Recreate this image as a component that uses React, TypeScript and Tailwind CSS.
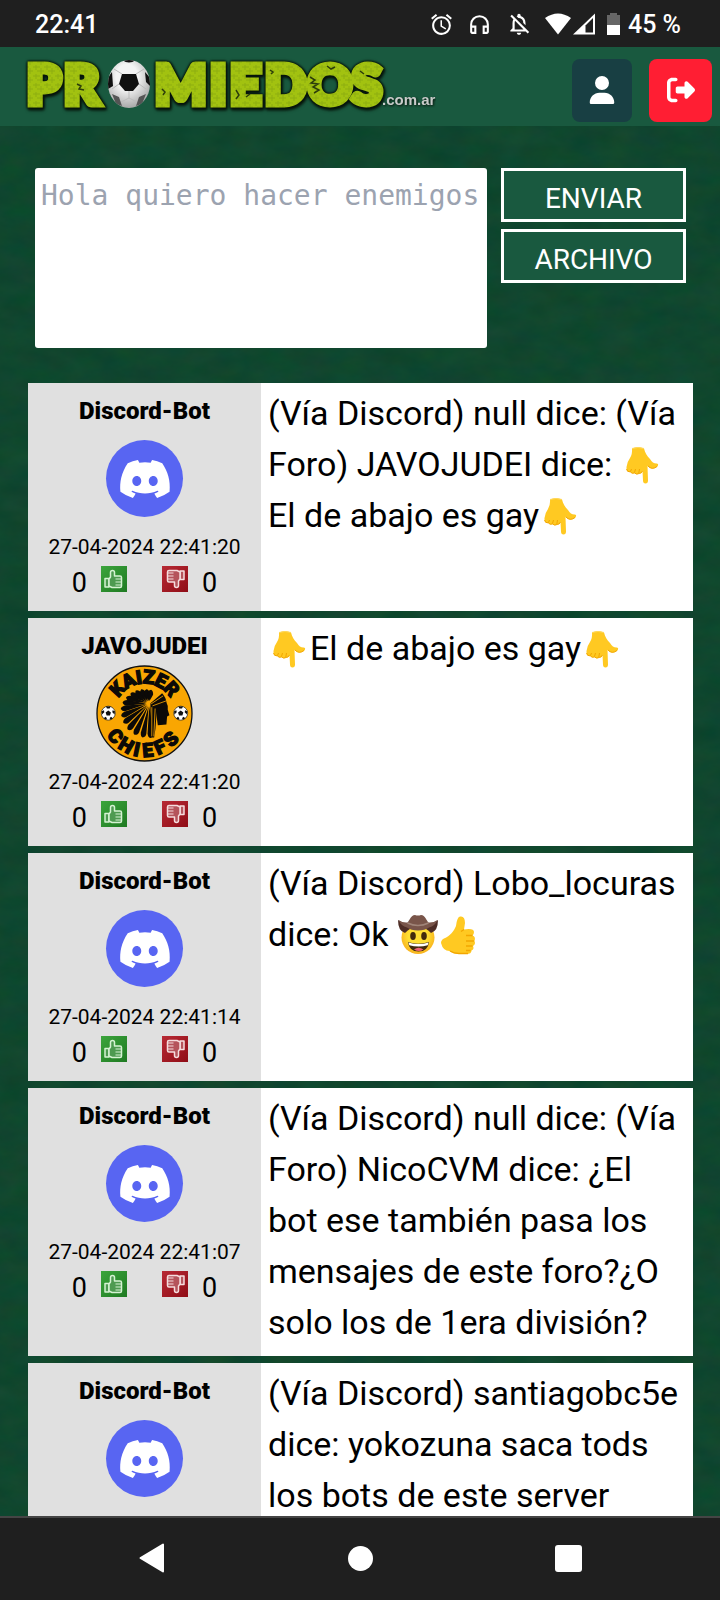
import type { ReactNode } from "react";
import { FaDiscord, FaRightFromBracket, FaUser } from "react-icons/fa6";
import { MdAlarm, MdOutlineHeadphones, MdOutlineNotificationsOff } from "react-icons/md";

type Message = {
  id: number;
  user: string;
  avatar: "discord" | "kaizer";
  date?: string;
  body: ReactNode;
};

function PointDown() {
  return (
    <svg viewBox="0 0 40 40" role="img" aria-label="👇" className="mx-px inline-block h-10 w-10 align-[-9px]">
      <path
        d="M10 3.5Q16 .5 22 3.500C23 8 25 11 28 14q3 5 7 4.500q2 .5.500 3q-6 4-10-.5l.5 14.500q0 3-2.500 3t-2.500-3L20.500 26q-1 3-3.500 2.500q-2.500 1.500-4.500-.5q-3 1-4-1q-4.500.5-4-5q.5-5 3.500-9Q10.500 9 10 3.500Z"
        fill="#ffc922"
      />
      <path d="M10 3.500Q16 1.500 22 3.500" fill="none" stroke="#ffd95e" />
      <path d="M4.600 24q0 3 4 3q1 2 4 1q2 2 4.500.5q2.500 0 3.400-2.500M9.500 24l-1 2.500M13.500 24l-1 3.500M17.500 24l-.7 4M26 21q4 4.500 9 .5" fill="none" stroke="#f2a600" strokeWidth="1" />
    </svg>
  );
}

function Cowboy() {
  return (
    <svg viewBox="0 0 42 42" role="img" aria-label="🤠" className="inline-block h-[42px] w-[42px] align-[-10px]">
      <defs>
        <radialGradient id="face" cx=".5" cy=".45" r=".6">
          <stop offset=".5" stopColor="#ffdf32" />
          <stop offset="1" stopColor="#f7a91a" />
        </radialGradient>
      </defs>
      <circle cx="21" cy="23.500" r="16.500" fill="url(#face)" />
      <path d="M1 6q0 11 7 13q5-6 13-6t13 6q7-2 7-13q-5 4-9 4.500L21 14 10 10.500Q5 9 1 6Z" fill="#4e2d26" />
      <path d="M1.500 6Q6 9 10.500 8.500C13 6 13.500 1.500 18 1q3 1 6 0c4.500.5 5 5 7.500 7.500Q36 9 40.500 6Q38 12 32 13.500q-4 3-11 3t-11-3Q4 12 1.500 6Z" fill="#79554a" />
      <path d="M10.500 9q10.500 5 21 0" fill="none" stroke="#a08478" strokeWidth="1.400" />
      <ellipse cx="16" cy="22" rx="2.800" ry="4" fill="#422b0d" />
      <ellipse cx="27" cy="22" rx="2.800" ry="4" fill="#422b0d" />
      <path d="M11 28q10 3.500 21 0q-1 9.500-10.500 9.500T11 28Z" fill="#422b0d" />
      <path d="M11.500 28.500q10 3 20 0l-.8 2.800q-9 2.500-18.400 0Z" fill="#fff" />
      <path d="M17 35.500q4.500-3.500 9.500 0q-4.500 3-9.500 0Z" fill="#ed6274" />
    </svg>
  );
}

function ThumbUpEmoji() {
  return (
    <svg viewBox="0 0 40 40" role="img" aria-label="👍" className="inline-block h-10 w-10 align-[-9px]">
      <path
        d="M2 28Q2 25 5 23.500C11 21 15 16 17 11q1-9 4-9.500q5-1 5 6.500l-1 6.500Q35 13 35 17q0 2-1.500 3.500Q37 21.500 35.500 26q1.500 3-1.500 5q1.500 3-1.500 4.500q0 3.500-5 3.500H20q-6 0-9.500-3Q4 36 2 28Z"
        fill="#ffc922"
      />
      <path d="M33.500 20.500H27M35 26h-8M33.500 31H27M31.500 35.500H27M25 14.500l-3 2M11 36q4 2.500 9 2.500h9" fill="none" stroke="#f2a600" strokeWidth="1.300" />
    </svg>
  );
}

const messages: Message[] = [
  {
    id: 1,
    user: "Discord-Bot",
    avatar: "discord",
    date: "27-04-2024 22:41:20",
    body: (
      <>
        (Vía Discord) null dice: (Vía Foro) JAVOJUDEI dice: <PointDown /> El de abajo es gay
        <PointDown />
      </>
    ),
  },
  {
    id: 2,
    user: "JAVOJUDEI",
    avatar: "kaizer",
    date: "27-04-2024 22:41:20",
    body: (
      <>
        <PointDown />
        El de abajo es gay
        <PointDown />
      </>
    ),
  },
  {
    id: 3,
    user: "Discord-Bot",
    avatar: "discord",
    date: "27-04-2024 22:41:14",
    body: (
      <>
        (Vía Discord) Lobo_locuras dice: Ok <Cowboy />
        <ThumbUpEmoji />
      </>
    ),
  },
  {
    id: 4,
    user: "Discord-Bot",
    avatar: "discord",
    date: "27-04-2024 22:41:07",
    body: "(Vía Discord) null dice: (Vía Foro) NicoCVM dice: ¿El bot ese también pasa los mensajes de este foro?¿O solo los de 1era división?",
  },
  {
    id: 5,
    user: "Discord-Bot",
    avatar: "discord",
    body: "(Vía Discord) santiagobc5e dice: yokozuna saca tods los bots de este server",
  },
];

function StatusBar() {
  return (
    <div className="flex h-[47px] shrink-0 items-center bg-[#1f1f1f] pt-px pr-[39px] pl-[35px] text-[25px] leading-none font-medium text-white">
      <span className="flex-1">22:41</span>
      <div className="flex items-center">
        <MdAlarm className="mr-[13px] size-[25px]" />
        <MdOutlineHeadphones className="mr-[14px] size-[25px]" />
        <MdOutlineNotificationsOff className="mr-[13px] size-[26px]" />
        <svg viewBox="0 0 50 22" className="mr-3 h-[22px] w-[50px]" aria-hidden="true">
          <path d="M0 5Q13-4 26 5L13 21.500Z" fill="#fff" />
          <path d="M28 21.500 50 .5v21Z" fill="#fff" />
          <path d="M40.500 12.500 48 5v14.500h-7.500Z" fill="#1f1f1f" />
        </svg>
        <svg viewBox="0 0 13 22" className="mr-2 h-[22px] w-[13px]" aria-hidden="true">
          <path d="M0 2h3V0h7v2h3v20H0Z" fill="#666" />
          <path d="M0 12h13v10H0Z" fill="#fff" />
        </svg>
        <span>45 %</span>
      </div>
    </div>
  );
}

const logoLetters = [
  { c: "P", x: 5 },
  { c: "R", x: 42 },
  { c: "M", x: 133 },
  { c: "I", x: 188 },
  { c: "E", x: 208 },
  { c: "D", x: 243 },
  { c: "O", x: 286 },
  { c: "S", x: 330 },
];

function Logo() {
  return (
    <svg viewBox="0 0 414 79" className="h-[79px] w-[414px]" role="img" aria-label="Promiedos.com.ar">
      <defs>
        <pattern id="weave" width="11" height="9" patternUnits="userSpaceOnUse">
          <rect width="11" height="9" fill="#a2c210" />
          <path d="M0 2h7M4 6h7M3 0v5M8 3v6" stroke="#8fae10" strokeWidth="1" />
        </pattern>
        <radialGradient id="ball" cx=".45" cy=".35" r=".65">
          <stop offset=".4" stopColor="#f4f4f4" />
          <stop offset="1" stopColor="#a9a9a9" />
        </radialGradient>
        <clipPath id="ballClip">
          <ellipse cx="105" cy="27" rx="21" ry="24" />
        </clipPath>
      </defs>
      <g
        fill="url(#weave)"
        stroke="url(#weave)"
        strokeWidth="7"
        strokeLinejoin="miter"
        fontFamily="Lato, sans-serif"
        fontWeight="900"
        fontSize="54"
        className="[filter:drop-shadow(0_0_1px_#07140b)_drop-shadow(0_0_1px_#07140b)_drop-shadow(1px_2px_1px_#07140b)]"
      >
        {logoLetters.map(({ c, x }) => (
          <text key={c} x={x} y="57">
            {c}
          </text>
        ))}
      </g>
      <g transform="translate(2 10)">
        <path
          d="M53 27l4 2-2 3 5 1M138 32l3 3-2 3M246 13l3 2-2 2M212 33l3 5-3 4M222 40l4-3M286 20l5 3-4 3 7 1-5 3 6 3-5 3M303 9l4 3 4-2M336 14l4 3"
          fill="none"
          stroke="#2c3d0b"
          strokeWidth="1.500"
        />
        <ellipse cx="105" cy="27" rx="21" ry="24" fill="url(#ball)" />
        <g clipPath="url(#ballClip)" fill="#101010">
          <path d="M98 17h14l3 10-6 7h-8l-6-7Z" />
          <path d="M97 2q8 7 16 0ZM83 22l5-7 1 14-5 3ZM127 22l-6-7 1 10 5 5Z" />
          <path d="M88 37l7 3 3 9-6-2ZM122 37l-7 3-3 9 6-2Z" fill="#555" />
          <path d="M98 17l-8-5M112 17l8-5M95 27l-7 5M115 27l7 5M105 34v7M97 45l8-4 8 4" stroke="#bbb" fill="none" />
        </g>
      </g>
      <text
        x="360"
        y="58"
        fill="#c9cbca"
        fontFamily="'Liberation Sans', sans-serif"
        fontWeight="700"
        fontSize="15"
        className="[filter:drop-shadow(1px_1px_1px_#07140b)]"
      >
        .com.ar
      </text>
    </svg>
  );
}

function Header() {
  return (
    <header className="flex h-[79px] shrink-0 items-center justify-between bg-[#19593f] pr-2 pl-[22px]">
      <a href="#inicio">
        <Logo />
      </a>
      <div className="flex gap-[17px] pt-[7px]">
        <button aria-label="Perfil" className="flex h-[63px] w-[60px] items-center justify-center rounded-lg bg-[#183f43] text-white">
          <FaUser className="size-7" />
        </button>
        <button aria-label="Salir" className="flex size-[63px] items-center justify-center rounded-lg bg-[#ff1e33] text-white">
          <FaRightFromBracket className="size-7" />
        </button>
      </div>
    </header>
  );
}

function Composer() {
  const button = "h-[54px] border-3 border-white bg-[#19593f] pt-2 text-[28px] leading-none text-white";
  return (
    <form className="flex items-start gap-[14px] pr-[34px] pl-[35px]">
      <textarea
        aria-label="Mensaje"
        placeholder="Hola quiero hacer enemigos"
        className="h-[180px] min-w-0 flex-1 resize-none overflow-hidden rounded-[3px] bg-white py-[9px] pl-[6px] font-['DejaVu_Sans_Mono',monospace] text-[28px] leading-[38px] text-black placeholder:text-[#9ca3b0]"
      />
      <div className="flex w-[185px] flex-col gap-[7px]">
        <button type="button" className={button}>ENVIAR</button>
        <button type="button" className={button}>ARCHIVO</button>
      </div>
    </form>
  );
}

function DiscordAvatar() {
  return (
    <div className="flex size-[77px] items-center justify-center rounded-full bg-[#5865f2] text-white">
      <FaDiscord className="size-[54px]" />
    </div>
  );
}

const feathers = [
  [88, 104], [101, 104], [115, 104], [129, 102], [143, 97], [156, 92], [169, 87],
  [182, 80], [195, 72], [209, 64], [224, 56], [241, 49], [259, 44], [278, 42],
];

const crestTop = [
  { c: "K", angle: -48 },
  { c: "A", angle: -26 },
  { c: "I", angle: -9 },
  { c: "Z", angle: 7 },
  { c: "E", angle: 27 },
  { c: "R", angle: 48 },
];

const crestBottom = [
  { c: "C", angle: 52 },
  { c: "H", angle: 30 },
  { c: "I", angle: 12 },
  { c: "E", angle: -5 },
  { c: "F", angle: -25 },
  { c: "S", angle: -46 },
];

function CrestBall({ x }: { x: number }) {
  return (
    <g transform={`translate(${x} 160)`}>
      <circle r="21" fill="#fff" stroke="#111" strokeWidth="2" />
      <path d="M0-8 8-2 5 7H-5L-8-2ZM-7-20 7-20 4-14H-4ZM-20-6-13-9-12-3-19 4ZM20-6 13-9 12-3 19 4ZM-14 15-8 11-4 15-7 20ZM14 15 8 11 4 15 7 20Z" fill="#111" />
    </g>
  );
}

function KaizerAvatar() {
  return (
    <svg viewBox="6 15 292 292" className="size-[97px]" role="img" aria-label="Kaizer Chiefs">
      <circle cx="152" cy="161" r="143" fill="#f9a602" stroke="#111" strokeWidth="4" />
      <g fill="#0c0a08" stroke="#0c0a08" strokeWidth="4" fontFamily="Roboto, sans-serif" fontWeight="900" fontSize="58" textAnchor="middle">
        {crestTop.map(({ c, angle }) => (
          <text key={c} transform={`translate(152 161) rotate(${angle})`} y="-90">
            {c}
          </text>
        ))}
        {crestBottom.map(({ c, angle }) => (
          <text key={c} transform={`translate(152 161) rotate(${angle})`} y="131">
            {c}
          </text>
        ))}
      </g>
      <CrestBall x={43} />
      <CrestBall x={261} />
      <g fill="#0c0a08">
        {feathers.map(([angle, length]) => (
          <path
            key={angle}
            transform={`translate(166 131) rotate(${angle})`}
            d={`M8 0 ${length - 14}-9Q${length - 4}-10 ${length} 0Q${length - 2} 7 ${length - 14} 8Z`}
          />
        ))}
        <path d="M170 130 205 100q12 12 14 32l-30 20-4 55-4 26h-13Z" />
        <path d="M186 150l33-20q5 8 3 20l5 16-7 4-2 24-26 2Z" />
      </g>
      <path d="M172 132l36-24M176 138l44-16M174 142v88M184 146l-4 84" stroke="#f9a602" strokeWidth="2.500" fill="none" />
    </svg>
  );
}

function VoteIcon({ down = false }: { down?: boolean }) {
  return (
    <svg viewBox="0 0 26 26" className="size-[26px]" aria-hidden="true">
      <defs>
        <linearGradient id="voteUp" x2="1" y2="1">
          <stop stopColor="#3ca53c" />
          <stop offset="1" stopColor="#1f7a22" />
        </linearGradient>
        <linearGradient id="voteDown" x2="1" y2="1">
          <stop stopColor="#b82a35" />
          <stop offset="1" stopColor="#8f0d16" />
        </linearGradient>
      </defs>
      <rect width="26" height="26" fill={down ? "url(#voteDown)" : "url(#voteUp)"} />
      <g
        transform={down ? "rotate(180 13 13)" : undefined}
        fill={down ? "#b5545b" : "#4d9a50"}
        stroke={down ? "#f5dcdd" : "#d5f2d2"}
        strokeWidth="1.500"
        strokeLinejoin="round"
      >
        <path d="M4 12.500h4V21H4Z" />
        <path d="M8 13l1.500-2V6.500q0-2 2-2t2 2V10H19q1.500 0 1.500 1.500V20q0 1.500-1.500 1.500H11L8 20Z" />
        <path d="M14.500 13H20M14.500 16H20M14.500 19H20" strokeWidth="1.200" />
      </g>
    </svg>
  );
}

function Post({ message }: { message: Message }) {
  return (
    <article className="flex min-h-[228px] shrink-0 bg-white">
      <div className="flex w-[233px] shrink-0 flex-col items-center bg-[#e0e0e0] pt-[14px] text-black">
        <h2 className="text-[24px] leading-7 font-black">{message.user}</h2>
        <div className="flex h-[107px] items-center">
          {message.avatar === "discord" ? <DiscordAvatar /> : <KaizerAvatar />}
        </div>
        {message.date && (
          <>
            <time className="text-[21px] leading-[30px]">{message.date}</time>
            <div className="flex items-start text-[27px] leading-[42px]">
              <span>0</span>
              <button aria-label="Me gusta" className="mt-1 mr-[35px] ml-[14px]">
                <VoteIcon />
              </button>
              <button aria-label="No me gusta" className="mt-1 mr-[14px]">
                <VoteIcon down />
              </button>
              <span>0</span>
            </div>
          </>
        )}
      </div>
      <p className="min-w-0 flex-1 px-[7px] pt-[5px] pb-2 text-[34px] leading-[51px] text-black">{message.body}</p>
    </article>
  );
}

function Felt() {
  return (
    <svg className="absolute inset-0 size-full" aria-hidden="true">
      <filter id="felt" x="0" y="0" width="100%" height="100%" colorInterpolationFilters="sRGB">
        <feTurbulence type="fractalNoise" baseFrequency=".03 .05" numOctaves="4" seed="4" />
        <feColorMatrix values="0.07 0 0 0 0.027  0 0.05 0 0 0.25  0 0 0.05 0 0.155  0 0 0 0 1" />
      </filter>
      <rect width="100%" height="100%" filter="url(#felt)" />
    </svg>
  );
}

function NavigationBar() {
  return (
    <nav className="grid h-[84px] shrink-0 grid-cols-3 items-center border-t-2 border-[#454545] bg-[#1f1f1f] px-12 pb-[2px]">
      <button aria-label="Atrás" className="flex justify-center">
        <svg viewBox="0 0 26 30" className="h-[30px] w-[26px]">
          <path d="M24 1.500v27L1.500 15Z" fill="#fff" stroke="#fff" strokeWidth="2" strokeLinejoin="round" />
        </svg>
      </button>
      <button aria-label="Inicio" className="flex justify-center">
        <span className="size-[25px] rounded-full bg-white" />
      </button>
      <button aria-label="Recientes" className="flex justify-center">
        <span className="size-[27px] rounded-[3px] bg-white" />
      </button>
    </nav>
  );
}

export default function App() {
  return (
    <div className="flex h-screen flex-col overflow-hidden font-[Roboto,sans-serif]">
      <StatusBar />
      <Header />
      <main className="relative min-h-0 flex-1 overflow-hidden bg-[#10472f]">
        <Felt />
        <div className="relative flex flex-col gap-[35px] pt-[42px]">
          <Composer />
          <section className="flex flex-col gap-[7px] pr-[27px] pl-7" aria-label="Mensajes">
            {messages.map((message) => (
              <Post key={message.id} message={message} />
            ))}
          </section>
        </div>
      </main>
      <NavigationBar />
    </div>
  );
}
